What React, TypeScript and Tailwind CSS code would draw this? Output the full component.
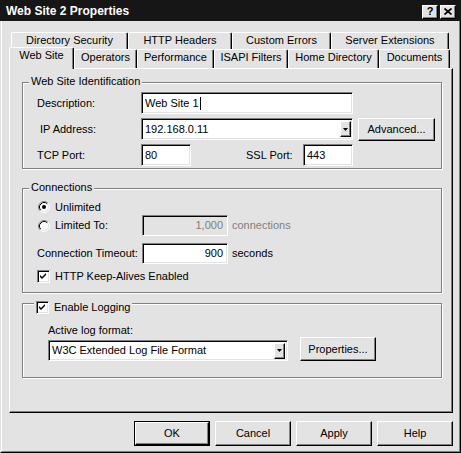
import React from 'react';

const raised =
  'border border-t-white border-l-white border-r-black border-b-black shadow-[inset_-1px_-1px_0_#808080]';
const sunken =
  'border border-t-[#808080] border-l-[#808080] border-r-white border-b-white shadow-[inset_1px_1px_0_#000,inset_-1px_-1px_0_#e3e3e3]';
const etched = 'border border-[#808080] shadow-[inset_1px_1px_0_#fff,1px_1px_0_#fff]';

const backRow = [
  { label: 'Directory Security', w: 'w-[117px]' },
  { label: 'HTTP Headers', w: 'w-[104px]' },
  { label: 'Custom Errors', w: 'w-[99px]' },
  { label: 'Server Extensions', w: 'w-[118px]' },
];

const frontRow = [
  { label: 'Operators', w: 'w-[63px]' },
  { label: 'Performance', w: 'w-[77px]' },
  { label: 'ISAPI Filters', w: 'w-[74px]' },
  { label: 'Home Directory', w: 'w-[91px]' },
  { label: 'Documents', w: 'w-[71px]' },
];

function Tab({ label, w }: { label: string; w: string }) {
  return (
    <div
      className={`${w} h-full flex justify-center pt-[1px] leading-[13px] border-t border-l border-r border-t-white border-l-white border-r-black rounded-t-[2px] shadow-[inset_-1px_0_0_#808080]`}
    >
      {label}
    </div>
  );
}

function Button({ label, className = '' }: { label: string; className?: string }) {
  return (
    <div className={`${raised} bg-[#e3e3e3] flex items-center justify-center ${className}`}>{label}</div>
  );
}

function DropArrow({ className = '' }: { className?: string }) {
  return (
    <div className={`${raised} bg-[#e3e3e3] w-[11px] h-[16px] flex items-center justify-center ${className}`}>
      <svg width="5" height="3" viewBox="0 0 5 3">
        <path d="M0 0H5L2.5 3Z" fill="#000" />
      </svg>
    </div>
  );
}

function Radio({ checked }: { checked?: boolean }) {
  return (
    <svg width="12" height="12" viewBox="0 0 12 12" className="shrink-0">
      <circle cx="6" cy="6" r="4.5" fill="#fff" />
      <path d="M2.11 9.89A5.5 5.5 0 0 1 9.89 2.11" stroke="#808080" fill="none" />
      <path d="M9.89 2.11A5.5 5.5 0 0 1 2.11 9.89" stroke="#fff" fill="none" />
      <path d="M2.82 9.18A4.5 4.5 0 0 1 9.18 2.82" stroke="#000" fill="none" />
      <path d="M9.18 2.82A4.5 4.5 0 0 1 2.82 9.18" stroke="#e3e3e3" fill="none" />
      {checked && <circle cx="6" cy="6" r="2" fill="#000" />}
    </svg>
  );
}

function Checkbox() {
  return (
    <div className={`${sunken} w-[13px] h-[13px] bg-white flex items-center justify-center shrink-0`}>
      <svg width="7" height="7" viewBox="0 0 7 7">
        <polygon points="0,2 2,4 6,0 6,2 2,6 0,4" fill="#000" />
      </svg>
    </div>
  );
}

export default function App() {
  return (
    <div className="w-[461px] h-[453px] bg-[#e3e3e3] flex flex-col text-[11px] text-black [font-family:'Liberation_Sans',Arial,sans-serif]">
      {/* title bar */}
      <div className="h-[21px] shrink-0 bg-[#161616] flex items-center pl-[6px] pr-[5px]">
        <span className="text-white font-bold text-[12px]">Web Site 2 Properties</span>
        <div className="ml-auto mt-[2px] flex gap-[2px]">
          <div className={`${raised} bg-[#e3e3e3] w-[16px] h-[14px] flex items-center justify-center font-bold text-[11px] leading-none`}>
            ?
          </div>
          <div className={`${raised} bg-[#e3e3e3] w-[16px] h-[14px] flex items-center justify-center`}>
            <svg width="8" height="7" viewBox="0 0 8 7">
              <path d="M0.5 0.5L7.5 6.5M7.5 0.5L0.5 6.5" stroke="#000" strokeWidth="1.7" />
            </svg>
          </div>
        </div>
      </div>

      <div className="flex-1 flex flex-col border-l border-r border-b border-l-[#e3e3e3] border-r-black border-b-black">
        <div className="flex-1 flex flex-col border-l border-r border-b border-l-white border-r-[#808080] border-b-[#808080] pt-[11px] pl-[7px]">
          {/* tabs */}
          <div className="flex h-[17px] ml-[2px]">
            {backRow.map((t) => (
              <Tab key={t.label} label={t.label} w={t.w} />
            ))}
          </div>
          <div className="flex h-[19px] items-end">
            <div className="relative z-10 w-[65px] h-[22px] -mb-[1px] bg-[#e3e3e3] flex justify-center pt-[1px] leading-[13px] border-t border-l border-r border-t-white border-l-white border-r-black rounded-t-[2px] shadow-[inset_-1px_0_0_#808080]">
              Web Site
            </div>
            {frontRow.map((t) => (
              <Tab key={t.label} label={t.label} w={t.w} />
            ))}
          </div>

          {/* panel */}
          <div className="w-[444px] h-[345px] border border-t-white border-l-white border-r-black border-b-black shadow-[inset_-1px_-1px_0_#808080] pt-[13px] pl-[12px] pr-[10px]">
            {/* Web Site Identification */}
            <div className={`relative h-[87px] ${etched}`}>
              <span className="absolute -top-[8px] left-[6px] px-[2px] bg-[#e3e3e3] leading-[13px]">
                Web Site Identification
              </span>
              <div className="pl-[14px] pt-[9px]">
                <div className="flex items-center h-[22px]">
                  <span className="w-[104px]">Description:</span>
                  <div className={`${sunken} bg-white w-[212px] h-[22px] flex items-center pl-[3px]`}>
                    Web Site 1<span className="ml-[1px] w-[1px] h-[13px] bg-black" />
                  </div>
                </div>
                <div className="flex items-center h-[22px] mt-[4px]">
                  <span className="w-[104px] pl-[3px]">IP Address:</span>
                  <div className={`${sunken} bg-white w-[212px] h-[22px] flex items-center pl-[3px]`}>
                    <span className="flex-1">192.168.0.11</span>
                    <DropArrow className="mr-[1px]" />
                  </div>
                  <Button label="Advanced..." className="ml-[5px] w-[77px] h-[23px]" />
                </div>
                <div className="flex items-center h-[22px] mt-[4px]">
                  <span className="w-[104px]">TCP Port:</span>
                  <div className={`${sunken} bg-white w-[50px] h-[22px] flex items-center pl-[3px]`}>80</div>
                  <span className="ml-[55px] w-[57px]">SSL Port:</span>
                  <div className={`${sunken} bg-white w-[50px] h-[22px] flex items-center pl-[3px]`}>443</div>
                </div>
              </div>
            </div>

            {/* Connections */}
            <div className={`relative mt-[19px] h-[105px] ${etched}`}>
              <span className="absolute -top-[8px] left-[6px] px-[2px] bg-[#e3e3e3] leading-[13px]">Connections</span>
              <div className="pl-[14px] pt-[10px]">
                <div className="flex items-center h-[16px]">
                  <span className="ml-[1px] flex">
                    <Radio checked />
                  </span>
                  <span className="ml-[5px]">Unlimited</span>
                </div>
                <div className="flex items-center h-[21px]">
                  <div className="w-[105px] flex items-center">
                    <span className="ml-[1px] flex">
                      <Radio />
                    </span>
                    <span className="ml-[5px]">Limited To:</span>
                  </div>
                  <div className={`${sunken} bg-[#e3e3e3] w-[86px] h-[21px] flex items-center justify-end pr-[4px] text-[#808080]`}>
                    1,000
                  </div>
                  <span className="ml-[4px] text-[#808080]">connections</span>
                </div>
                <div className="flex items-center h-[21px] mt-[7px]">
                  <span className="w-[105px]">Connection Timeout:</span>
                  <div className={`${sunken} bg-white w-[86px] h-[21px] flex items-center justify-end pr-[4px]`}>900</div>
                  <span className="ml-[4px]">seconds</span>
                </div>
                <div className="flex items-center h-[16px] mt-[4px]">
                  <Checkbox />
                  <span className="ml-[5px]">HTTP Keep-Alives Enabled</span>
                </div>
              </div>
            </div>

            {/* Logging */}
            <div className={`relative mt-[10px] h-[75px] ${etched}`}>
              <div className="absolute -top-[3px] left-[11px] px-[2px] bg-[#e3e3e3] h-[13px] flex items-center">
                <Checkbox />
                <span className="ml-[5px]">Enable Logging</span>
              </div>
              <div className="pl-[25px] pt-[20px]">
                <div className="leading-[13px]">Active log format:</div>
                <div className="flex items-start">
                  <div className={`${sunken} bg-white mt-[3px] w-[240px] h-[21px] flex items-center pl-[3px]`}>
                    <span className="flex-1">W3C Extended Log File Format</span>
                    <DropArrow className="mr-[2px]" />
                  </div>
                  <Button label="Properties..." className="ml-[12px] w-[76px] h-[24px]" />
                </div>
              </div>
            </div>
          </div>

          {/* dialog buttons */}
          <div className="mt-[8px] pr-[6px] flex justify-end gap-[5px]">
            <div className="border border-black">
              <Button label="OK" className="w-[74px] h-[23px]" />
            </div>
            <Button label="Cancel" className="w-[76px] h-[25px]" />
            <Button label="Apply" className="w-[76px] h-[25px]" />
            <Button label="Help" className="w-[76px] h-[25px]" />
          </div>
        </div>
      </div>
    </div>
  );
}
